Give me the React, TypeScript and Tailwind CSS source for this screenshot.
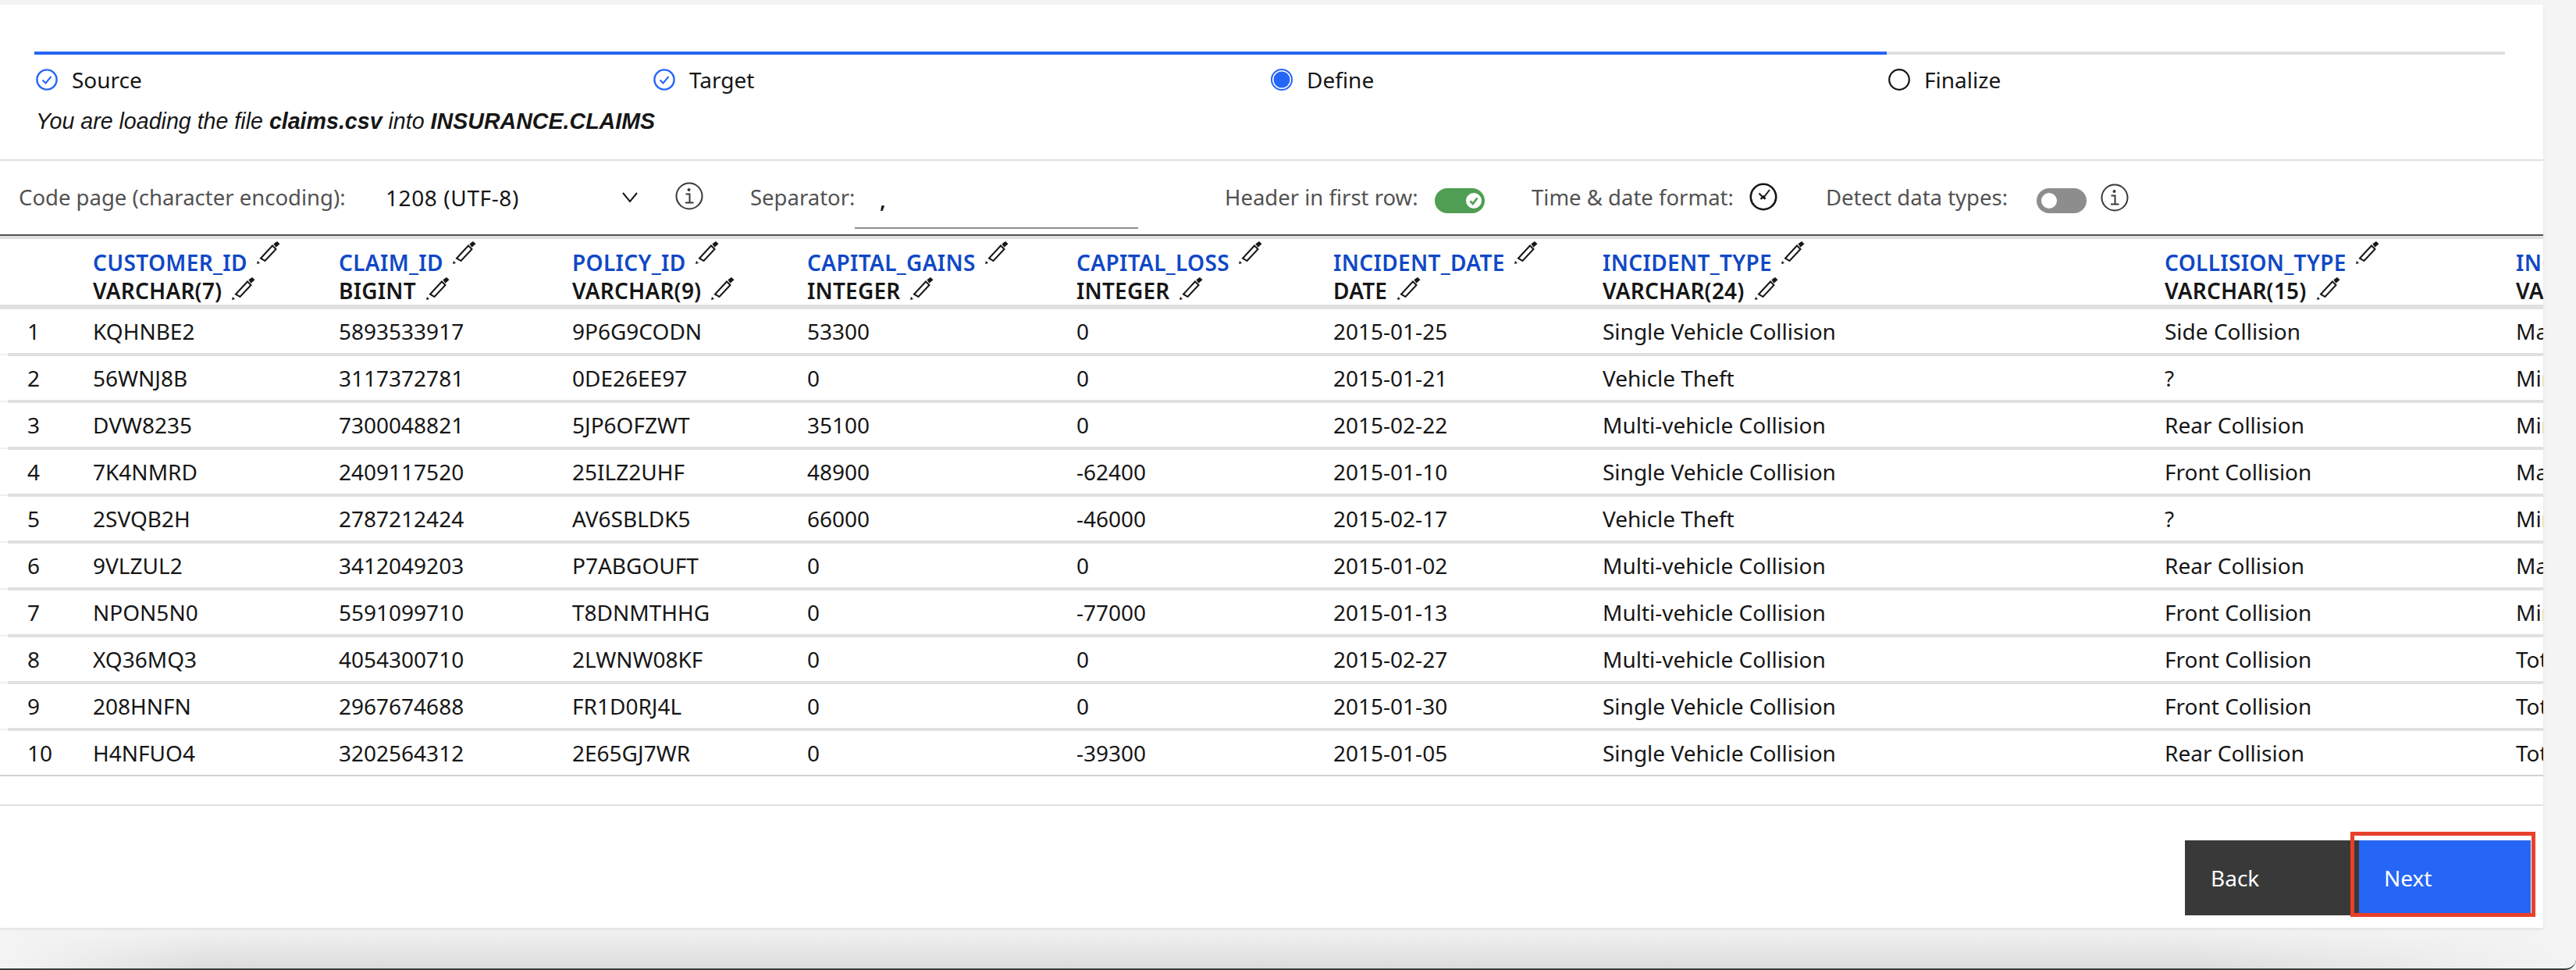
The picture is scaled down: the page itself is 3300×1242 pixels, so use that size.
const rows = [
  ["1", "KQHNBE2", "5893533917", "9P6G9CODN", "53300", "0", "2015-01-25", "Single Vehicle Collision", "Side Collision", "Major Damage"],
  ["2", "56WNJ8B", "3117372781", "0DE26EE97", "0", "0", "2015-01-21", "Vehicle Theft", "?", "Minor Damage"],
  ["3", "DVW8235", "7300048821", "5JP6OFZWT", "35100", "0", "2015-02-22", "Multi-vehicle Collision", "Rear Collision", "Minor Damage"],
  ["4", "7K4NMRD", "2409117520", "25ILZ2UHF", "48900", "-62400", "2015-01-10", "Single Vehicle Collision", "Front Collision", "Major Damage"],
  ["5", "2SVQB2H", "2787212424", "AV6SBLDK5", "66000", "-46000", "2015-02-17", "Vehicle Theft", "?", "Minor Damage"],
  ["6", "9VLZUL2", "3412049203", "P7ABGOUFT", "0", "0", "2015-01-02", "Multi-vehicle Collision", "Rear Collision", "Major Damage"],
  ["7", "NPON5N0", "5591099710", "T8DNMTHHG", "0", "-77000", "2015-01-13", "Multi-vehicle Collision", "Front Collision", "Minor Damage"],
  ["8", "XQ36MQ3", "4054300710", "2LWNW08KF", "0", "0", "2015-02-27", "Multi-vehicle Collision", "Front Collision", "Total Loss"],
  ["9", "208HNFN", "2967674688", "FR1D0RJ4L", "0", "0", "2015-01-30", "Single Vehicle Collision", "Front Collision", "Total Loss"],
  ["10", "H4NFUO4", "3202564312", "2E65GJ7WR", "0", "-39300", "2015-01-05", "Single Vehicle Collision", "Rear Collision", "Total Loss"],
];

const columns = [
  ["CUSTOMER_ID", "VARCHAR(7)"],
  ["CLAIM_ID", "BIGINT"],
  ["POLICY_ID", "VARCHAR(9)"],
  ["CAPITAL_GAINS", "INTEGER"],
  ["CAPITAL_LOSS", "INTEGER"],
  ["INCIDENT_DATE", "DATE"],
  ["INCIDENT_TYPE", "VARCHAR(24)"],
  ["COLLISION_TYPE", "VARCHAR(15)"],
  ["INCIDENT_SEVERITY", "VARCHAR(14)"],
];

const gridCols = "grid grid-cols-[119px_315px_299px_301px_345px_329px_345px_720px_450px_400px] w-[3623px]";

const Pencil = ({ className }: { className: string }) => (
  <svg viewBox="0 0 30 30" className={className}>
    <path d="M0 30 L1 26 L4 29 Z" fill="#161616" />
    <path d="M5 22.7 L20 6.5 L24.5 11 L10.5 26 Z" fill="none" stroke="#161616" strokeWidth="2" />
    <path d="M21.4 4.3 L26 1 L29.5 4.3 L24.5 8.7 Z" fill="#161616" />
  </svg>
);

const CheckStep = () => (
  <svg viewBox="0 0 28 28" className="w-[28px] h-[28px] shrink-0">
    <circle cx="14" cy="14" r="12.6" fill="none" stroke="#2666f6" strokeWidth="2.4" />
    <path d="M8.5 14.5 L12.5 18.5 L19.5 10" fill="none" stroke="#2666f6" strokeWidth="2" />
  </svg>
);

const ActiveStep = () => (
  <svg viewBox="0 0 28 28" className="w-[28px] h-[28px] shrink-0">
    <circle cx="14" cy="14" r="13" fill="none" stroke="#2666f6" strokeWidth="2" />
    <circle cx="14" cy="14" r="10.5" fill="#2666f6" />
  </svg>
);

const EmptyStep = () => (
  <svg viewBox="0 0 28 28" className="w-[28px] h-[28px] shrink-0">
    <circle cx="14" cy="14" r="12.8" fill="none" stroke="#161616" strokeWidth="2.2" />
  </svg>
);

const InfoIcon = ({ className }: { className: string }) => (
  <svg viewBox="0 0 36 36" className={className}>
    <circle cx="18" cy="18" r="16.5" fill="none" stroke="#393939" strokeWidth="2" />
    <circle cx="17.5" cy="10" r="2" fill="#393939" />
    <path d="M13.5 15.5 H18.5 V26 M13 26.5 H23.5" fill="none" stroke="#393939" strokeWidth="2" />
  </svg>
);

const ClockIcon = () => (
  <svg viewBox="0 0 36 36" className="w-[36px] h-[36px] shrink-0 -mt-[3px]">
    <circle cx="18" cy="18" r="16.2" fill="none" stroke="#161616" strokeWidth="2.6" />
    <path d="M12.5 13.5 L18 19.5 L26 9" fill="none" stroke="#161616" strokeWidth="2" />
    <path d="M14.5 21 L18 17.5 L20.5 21" fill="none" stroke="#161616" strokeWidth="2.4" />
  </svg>
);

const Toggle = ({ on }: { on: boolean }) => (
  <div
    className={
      on
        ? "w-[64px] h-[32px] shrink-0 mt-[8px] rounded-full bg-[#4f9e53] flex items-center justify-end pr-[4px]"
        : "w-[64px] h-[32px] shrink-0 mt-[8px] rounded-full bg-[#8d8d8d] flex items-center pl-[6px]"
    }
  >
    <div className="w-[20px] h-[20px] rounded-full bg-white flex items-center justify-center">
      {on && (
        <svg viewBox="0 0 20 20" className="w-[20px] h-[20px]">
          <path d="M5.5 10.5 L8.8 14 L14.5 6.5" fill="none" stroke="#4f9e53" strokeWidth="2.6" />
        </svg>
      )}
    </div>
  </div>
);

const Step = ({ icon, label }: { icon: React.ReactNode; label: string }) => (
  <div className="w-[791px] h-[28px] flex items-center gap-[18px] text-[28px] text-[#161616]">
    {icon}
    <span>{label}</span>
  </div>
);

const Row = ({ row, last }: { row: string[]; last: boolean }) => (
  <div className="flex flex-col">
    <div className={gridCols + " h-[56px] items-center text-[28px] text-[#161616]"}>
      {row.map((cell, i) => (
        <div key={i} className={i === 0 ? "pl-[35px]" : ""}>
          {cell}
        </div>
      ))}
    </div>
    {last ? (
      <div className="h-[2px] bg-[#d0d0d0]" />
    ) : (
      <div className="h-[4px] flex">
        <div className="w-[10px] my-[1px] bg-[#efefef]" />
        <div className="flex-1 bg-[#e0e0e0]" />
      </div>
    )}
  </div>
);

export default function App() {
  return (
    <div className="w-[3300px] h-[1242px] bg-[#f4f4f4] flex flex-col overflow-hidden font-['Noto_Sans',sans-serif]">
      <div className="w-[3258px] h-[1182px] mt-[6px] shrink-0 bg-white flex flex-col overflow-hidden shadow-[0_2px_4px_rgba(0,0,0,0.08)] relative">
        <section className="h-[198px] pt-[60px] pl-[44px] shrink-0">
          <div className="w-[3165px] h-[4px] bg-[#e0e0e0]">
            <div className="w-[2373px] h-[4px] bg-[#2666f6]" />
          </div>
          <div className="flex mt-[18px] pl-[2px]">
            <Step icon={<CheckStep />} label="Source" />
            <Step icon={<CheckStep />} label="Target" />
            <Step icon={<ActiveStep />} label="Define" />
            <Step icon={<EmptyStep />} label="Finalize" />
          </div>
          <p className="mt-[18px] pl-[2px] text-[28.6px] leading-[42px] italic text-[#161616] font-['Liberation_Sans',sans-serif]">
            You are loading the file <b>claims.csv</b> into <b>INSURANCE.CLAIMS</b>
          </p>
        </section>
        <div className="h-[2px] bg-[#e0e0e0] shrink-0" />

        <section className="h-[94px] shrink-0 flex items-center pl-[24px] text-[27.5px] text-[#525252]">
          <span className="w-[470px] shrink-0">Code page (character encoding):</span>
          <span className="w-[303px] shrink-0 text-[28px] tracking-[0.6px] text-[#161616]">1208 (UTF-8)</span>
          <svg viewBox="0 0 20 14" className="w-[20px] h-[14px] shrink-0 mr-[48px]">
            <path d="M1 1 L10 12 L19 1" fill="none" stroke="#161616" strokeWidth="2" />
          </svg>
          <InfoIcon className="w-[36px] h-[36px] shrink-0 -mt-[5px] mr-[60px]" />
          <span className="w-[134px] shrink-0">Separator:</span>
          <div className="w-[363px] h-[56px] shrink-0 mt-[24px] border-b-2 border-[#8d8d8d] pl-[32px] text-[#161616] font-semibold leading-[40px]">
            ,
          </div>
          <span className="w-[269px] ml-[111px] shrink-0">Header in first row:</span>
          <Toggle on={true} />
          <span className="w-[279px] ml-[60px] shrink-0">Time &amp; date format:</span>
          <ClockIcon />
          <span className="w-[270px] ml-[62px] shrink-0">Detect data types:</span>
          <Toggle on={false} />
          <InfoIcon className="w-[36px] h-[36px] shrink-0 ml-[18px] -mt-[1px]" />
        </section>

        <div className="h-[2px] bg-[#525252] shrink-0" />
        <div className="h-[4px] bg-[#e0e0e0] shrink-0" />

        <section className="shrink-0">
          <div className={gridCols + " h-[84px]"}>
            <div />
            {columns.map(([name, type]) => (
              <div key={name} className="flex flex-col text-[28px] font-semibold whitespace-nowrap">
                <div className="flex h-[48px]">
                  <span className="text-[#1048c6] mt-[12px] leading-[36px] tracking-[0.35px]">{name}</span>
                  <Pencil className="w-[30px] h-[30px] ml-[12px] mt-[2px] shrink-0" />
                </div>
                <div className="flex h-[36px]">
                  <span className="text-[#161616] leading-[36px] tracking-[0.2px]">{type}</span>
                  <Pencil className="w-[30px] h-[30px] ml-[13px] shrink-0" />
                </div>
              </div>
            ))}
          </div>
          <div className="h-[6px] bg-[#e0e0e0]" />
          {rows.map((row, i) => (
            <Row key={row[0]} row={row} last={i === rows.length - 1} />
          ))}
          <div className="h-[36px]" />
          <div className="h-[2px] bg-[#e0e0e0]" />
        </section>

        <footer className="mt-auto mb-[16px] pr-[16px] flex justify-end text-[28px] text-white">
          <div className="w-[223px] h-[96px] bg-[#393939] pl-[33px] flex items-center">Back</div>
          <div className="relative w-[220px] h-[96px] bg-[#2666f6] pl-[32px] flex items-center">
            Next
            <div className="absolute -left-[11px] -right-[6px] -top-[11px] -bottom-[2px] border-[5px] border-[#e8402a]" />
          </div>
        </footer>
      </div>
      <div className="h-[54px] shrink-0 border-b-2 border-[#3a3a3a] rounded-br-[14px] bg-[linear-gradient(to_right,#f4f4f4_0%,rgba(244,244,244,0)_8%,rgba(244,244,244,0)_85%,#f4f4f4_100%),linear-gradient(to_bottom,#f3f3f3,#dcdcdc)]" />
    </div>
  );
}
